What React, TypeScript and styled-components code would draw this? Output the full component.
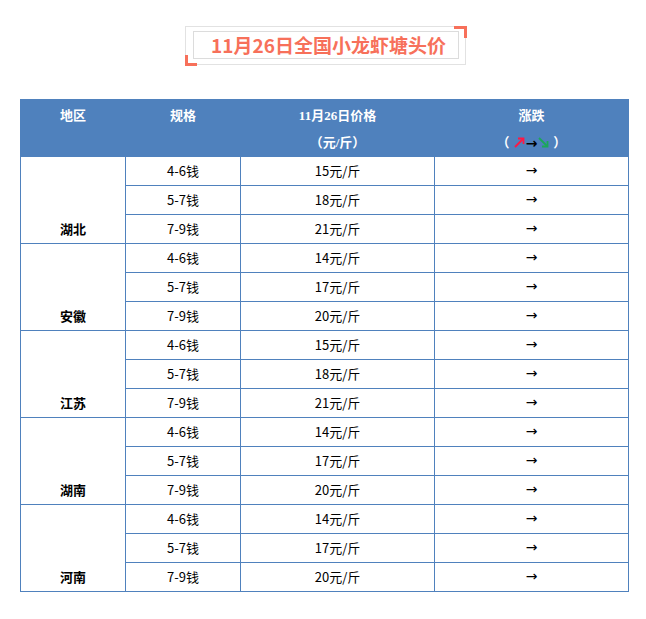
import React from "react";
import styled, { createGlobalStyle } from "styled-components";

const Global = createGlobalStyle`
  html, body { margin: 0; padding: 0; background: #ffffff; }
  body { font-family: "Noto Sans CJK SC", "Noto Sans", sans-serif; }
`;

const Page = styled.div`
  width: 646px;
  padding: 26px 18px 0 20px;
  box-sizing: border-box;
`;

const TitleWrap = styled.div`
  display: flex;
  justify-content: center;
  margin-bottom: 34px;
  padding-left: 2px;
`;

const TitleOuter = styled.div`
  position: relative;
  border: 1px solid #e2e2e2;
  padding: 4px 6px 5px 7px;
  &::before {
    content: "";
    position: absolute;
    top: -1px;
    right: -2px;
    width: 10px;
    height: 9px;
    border-top: 3px solid #f7705a;
    border-right: 3px solid #f7705a;
  }
  &::after {
    content: "";
    position: absolute;
    bottom: -2px;
    left: -1px;
    width: 9px;
    height: 8px;
    border-bottom: 3px solid #f7705a;
    border-left: 3px solid #f7705a;
  }
`;

const TitleInner = styled.div`
  width: 258px;
  height: 26px;
  border: 1px solid #dcdcdc;
  display: flex;
  align-items: center;
  justify-content: center;
  padding-left: 6px;
  box-sizing: content-box;
  color: #f7705a;
  font-weight: bold;
  font-size: 19px;
  line-height: 26px;
  white-space: nowrap;
`;

const Table = styled.table`
  border-collapse: collapse;
  width: 608px;
  table-layout: fixed;
`;

const Col = styled.col<{ $w: number }>`
  width: ${(p) => p.$w}px;
`;

const Th = styled.th`
  background: #4f81bd;
  color: #ffffff;
  font-family: "Liberation Serif", "Noto Sans CJK SC", serif;
  font-weight: bold;
  font-size: 13px;
  text-align: center;
  vertical-align: top;
  padding: 2px 0 0;
  height: 54px;
  border: 1px solid #4f81bd;
`;

const HeadLine = styled.div`
  height: 27px;
  line-height: 27px;
  display: flex;
  align-items: center;
  justify-content: center;
  overflow: hidden;
`;

const Td = styled.td<{ $bold?: boolean; $bottom?: boolean }>`
  border: 1px solid #4f81bd;
  padding: 0;
  height: 28px;
  line-height: 20px;
  text-align: center;
  font-size: 13px;
  color: #000000;
  font-weight: ${(p) => (p.$bold ? "bold" : "normal")};
  vertical-align: ${(p) => (p.$bottom ? "bottom" : "middle")};
  white-space: nowrap;
`;

const BottomLabel = styled.div`
  height: 28px;
  line-height: 28px;
  overflow: hidden;
`;

const Paren = styled.span`
  padding: 0 4px;
`;

const BlackArrow = styled.span`
  color: #000;
  font-family: "DejaVu Sans", sans-serif;
  font-size: 14px;
  line-height: 1;
  margin: 0 1px;
`;

const Arrow = styled.span`
  display: inline-block;
  font-family: "DejaVu Sans", sans-serif;
  font-size: 14px;
  line-height: 14px;
  vertical-align: middle;
  position: relative;
  top: -2px;
`;

const UpIcon = () => (
  <svg width="11" height="11" viewBox="0 0 11 11">
    <path d="M1 10 L9 2" stroke="#ff1744" strokeWidth="1.8" fill="none" />
    <path d="M4 1.5 L9.5 1.5 L9.5 7" stroke="#ff1744" strokeWidth="1.8" fill="none" />
  </svg>
);

const DownIcon = () => (
  <svg width="11" height="11" viewBox="0 0 11 11">
    <path d="M1 1 L9 9" stroke="#1aa85a" strokeWidth="1.8" fill="none" />
    <path d="M9.5 4 L9.5 9.5 L4 9.5" stroke="#1aa85a" strokeWidth="1.8" fill="none" />
  </svg>
);

const regions: { name: string; prices: number[] }[] = [
  { name: "湖北", prices: [15, 18, 21] },
  { name: "安徽", prices: [14, 17, 20] },
  { name: "江苏", prices: [15, 18, 21] },
  { name: "湖南", prices: [14, 17, 20] },
  { name: "河南", prices: [14, 17, 20] },
];

const specs = ["4-6钱", "5-7钱", "7-9钱"];

export default function App() {
  return (
    <Page>
      <Global />
      <TitleWrap>
        <TitleOuter>
          <TitleInner>11月26日全国小龙虾塘头价</TitleInner>
        </TitleOuter>
      </TitleWrap>
      <Table>
        <colgroup>
          <Col $w={105} />
          <Col $w={115} />
          <Col $w={194} />
          <Col $w={194} />
        </colgroup>
        <thead>
          <tr>
            <Th>
              <HeadLine>地区</HeadLine>
            </Th>
            <Th>
              <HeadLine>规格</HeadLine>
            </Th>
            <Th>
              <HeadLine>11月26日价格</HeadLine>
              <HeadLine>（元/斤）</HeadLine>
            </Th>
            <Th>
              <HeadLine>涨跌</HeadLine>
              <HeadLine>
                <Paren>（</Paren>
                <UpIcon />
                <BlackArrow>→</BlackArrow>
                <DownIcon />
                <Paren>）</Paren>
              </HeadLine>
            </Th>
          </tr>
        </thead>
        <tbody>
          {regions.map((r) =>
            specs.map((s, i) => (
              <tr key={r.name + s}>
                {i === 0 && (
                  <Td rowSpan={3} $bold $bottom>
                    <BottomLabel>{r.name}</BottomLabel>
                  </Td>
                )}
                <Td>{s}</Td>
                <Td>{r.prices[i]}元/斤</Td>
                <Td>
                  <Arrow>→</Arrow>
                </Td>
              </tr>
            ))
          )}
        </tbody>
      </Table>
    </Page>
  );
}
